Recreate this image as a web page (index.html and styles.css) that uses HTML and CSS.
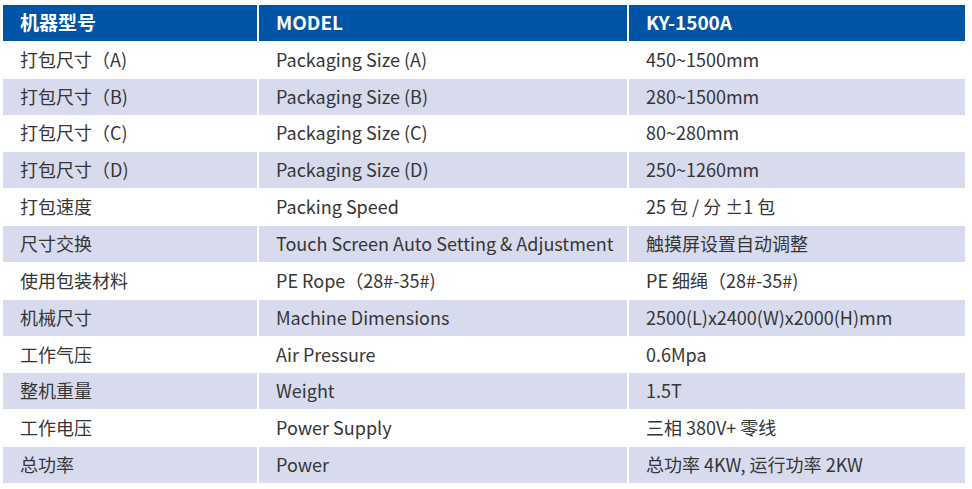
FILE: index.html
```html
<!DOCTYPE html>
<html lang="zh">
<head>
<meta charset="utf-8">
<title>KY-1500A</title>
<link rel="stylesheet" href="styles.css">
</head>
<body>
<div class="spec">
  <div class="cell head">机器型号</div><div class="cell head">MODEL</div><div class="cell head">KY-1500A</div>
  <div class="cell">打包尺寸（A)</div><div class="cell">Packaging Size (A)</div><div class="cell">450~1500mm</div>
  <div class="cell alt">打包尺寸（B)</div><div class="cell alt">Packaging Size (B)</div><div class="cell alt">280~1500mm</div>
  <div class="cell">打包尺寸（C)</div><div class="cell">Packaging Size (C)</div><div class="cell">80~280mm</div>
  <div class="cell alt">打包尺寸（D)</div><div class="cell alt">Packaging Size (D)</div><div class="cell alt">250~1260mm</div>
  <div class="cell">打包速度</div><div class="cell">Packing Speed</div><div class="cell">25 包 / 分 ±1 包</div>
  <div class="cell alt">尺寸交换</div><div class="cell alt">Touch Screen Auto Setting &amp; Adjustment</div><div class="cell alt">触摸屏设置自动调整</div>
  <div class="cell">使用包装材料</div><div class="cell">PE Rope（28#-35#)</div><div class="cell">PE 细绳（28#-35#)</div>
  <div class="cell alt">机械尺寸</div><div class="cell alt">Machine Dimensions</div><div class="cell alt">2500(L)x2400(W)x2000(H)mm</div>
  <div class="cell">工作气压</div><div class="cell">Air Pressure</div><div class="cell">0.6Mpa</div>
  <div class="cell alt">整机重量</div><div class="cell alt">Weight</div><div class="cell alt">1.5T</div>
  <div class="cell">工作电压</div><div class="cell">Power Supply</div><div class="cell">三相 380V+ 零线</div>
  <div class="cell alt">总功率</div><div class="cell alt">Power</div><div class="cell alt">总功率 4KW, 运行功率 2KW</div>
</div>
</body>
</html>
```
FILE: styles.css
```css
html, body {
  margin: 0;
  padding: 0;
  background: #ffffff;
}
body {
  padding: 5px 0 0 3px;
  font-family: "Noto Sans CJK SC", "Noto Sans", sans-serif;
}
.spec {
  display: grid;
  grid-template-columns: 254px 368px 336px;
  grid-template-rows: repeat(13, 1fr);
  column-gap: 2px;
  row-gap: 1px;
  width: 962px;
  height: 478px;
}
.cell {
  display: flex;
  align-items: center;
  padding-left: 17px;
  padding-bottom: 2px;
  font-size: 18px;
  color: #363636;
  background: #ffffff;
  white-space: nowrap;
}
.cell.alt {
  background: #d8daee;
}
.cell.head {
  background: #0054a5;
  color: #ffffff;
  font-weight: 700;
  font-size: 19px;
}
```
